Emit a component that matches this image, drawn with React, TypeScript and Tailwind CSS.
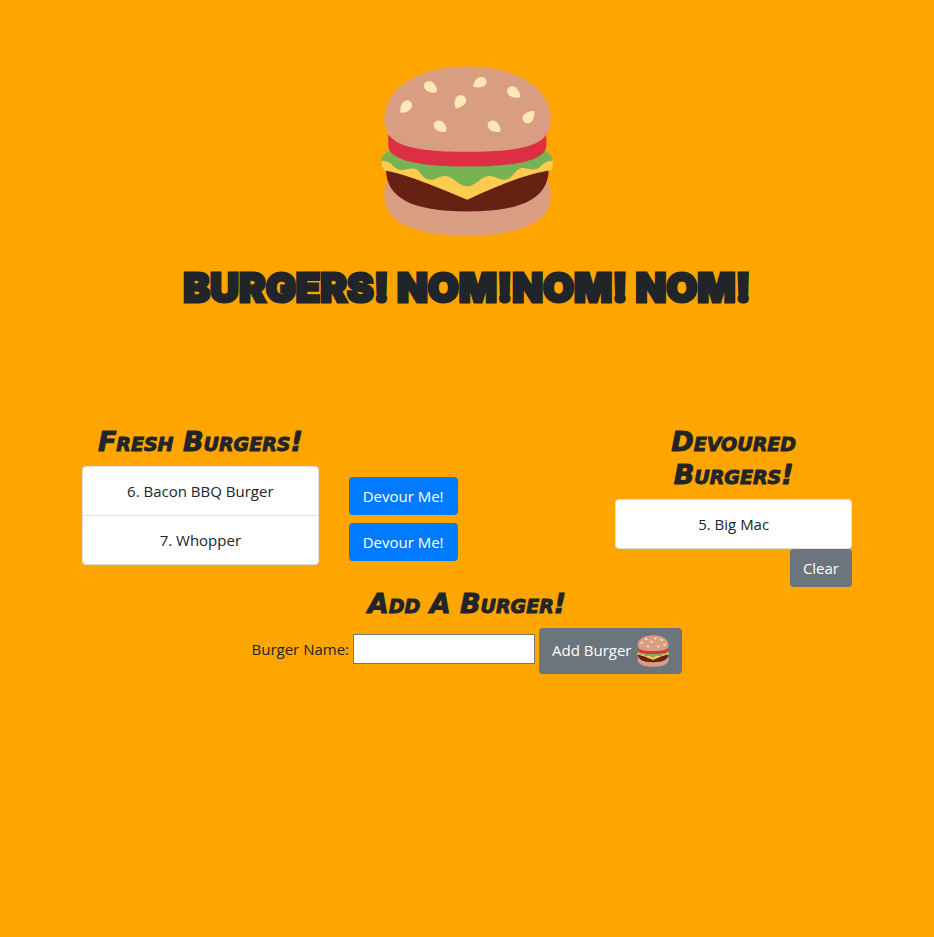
import type { ReactNode } from "react";

const fresh = [
  { id: 6, name: "Bacon BBQ Burger" },
  { id: 7, name: "Whopper" },
];
const devoured = [{ id: 5, name: "Big Mac" }];

const seeds = [
  "M91 168C90 150 98 137 112 136C124 138 130 150 124 159C117 169 104 175 91 173Z",
  "M163 86C168 77 181 76 190 84C198 92 202 103 199 111C187 116 172 112 165 103C161 97 161 91 163 86Z",
  "M308 92C312 77 320 67 333 66C346 67 351 77 348 86C343 97 325 101 308 95Z",
  "M255 158C250 143 253 130 264 122C276 118 288 125 288 136C286 149 273 158 260 160Z",
  "M412 101C418 92 432 92 440 102C447 110 451 121 448 127C435 131 420 127 413 118C409 112 409 106 412 101Z",
  "M491 168C476 168 463 173 457 183C453 195 462 206 474 205C487 201 493 187 491 168Z",
  "M192 204C198 194 211 194 220 203C228 211 231 222 228 229C216 233 201 229 194 220C190 214 190 209 192 204Z",
  "M353 204C359 194 372 194 381 203C389 211 392 222 389 229C377 233 362 229 355 220C351 214 351 209 353 204Z",
];

function Burger({ className }: { className: string }) {
  return (
    <svg className={className} viewBox="33 35 514 505" aria-hidden="true">
      <path fill="#D99E82" d="M43 420C43 385 55 368 80 360H503C528 368 540 385 540 420C540 500 455 540 291 540C128 540 43 500 43 420Z" />
      <path fill="#662113" d="M48 340H534C535 425 460 468 291 468C122 468 47 425 48 340Z" />
      <path fill="#FFCC4D" d="M37 315H545C547 328 547 340 543 345C490 351 410 377 291 433C172 383 95 354 43 345C36 340 35 328 37 315Z" />
      <path fill="#77B255" d="M58 286C47 293 38 302 33 312C38 321 46 316 56 321C70 329 75 343 91 344C108 345 116 338 132 340C151 344 153 367 173 373C193 378 204 361 226 362C252 365 266 393 291 393C317 393 329 364 354 362C376 361 389 377 408 373C429 367 432 344 451 339C466 337 474 344 491 343C507 342 513 327 526 320C535 316 543 321 547 312C542 302 535 294 525 286Z" />
      <path fill="#DD2E44" d="M55 240H527V271C527 313 445 334 291 334C137 334 55 313 55 271Z" />
      <path fill="#D99E82" d="M291 35C145 35 43 99 43 192C43 265 103 290 291 290C479 290 540 265 540 192C540 99 438 35 291 35Z" />
      <g fill="#FFE8B6">
        {seeds.map((d) => (
          <path key={d} d={d} />
        ))}
      </g>
    </svg>
  );
}

function Heading({ children }: { children: ReactNode }) {
  return (
    <h3 className="mb-2 text-center font-['DejaVu_Sans'] text-[27px] leading-[33px] font-bold italic [font-variant-caps:small-caps] [-webkit-text-stroke:1px_#212529]">
      {children}
    </h3>
  );
}

function BurgerList({ items }: { items: { id: number; name: string }[] }) {
  return (
    <ul className="divide-y divide-[#dfdfdf] rounded border border-[#dfdfdf] bg-white text-center">
      {items.map((b) => (
        <li key={b.id} className="px-5 py-3">
          {b.id}. {b.name}
        </li>
      ))}
    </ul>
  );
}

export default function App() {
  return (
    <div className="min-h-screen bg-[#ffa500] pt-16 font-['Open_Sans',sans-serif] text-[15px] leading-6 text-[#212529]">
      <header className="flex flex-col items-center">
        <Burger className="mt-0.5 h-[170px] w-[172px]" />
        <h1 className="mt-6 text-center font-['Inter'] text-[40px] leading-[56px] font-black [-webkit-text-stroke:3px_#212529] [stroke-linejoin:round]">
          BURGERS! NOM!NOM! NOM!
        </h1>
      </header>

      <main className="mx-auto mt-[109px] max-w-[800px] px-[15px]">
        <div className="grid grid-cols-3 gap-[30px]">
          <section>
            <Heading>Fresh Burgers!</Heading>
            <BurgerList items={fresh} />
          </section>
          <div className="flex flex-col items-start gap-2 pt-[52px]">
            {fresh.map((b) => (
              <button key={b.id} type="button" className="h-[38px] rounded bg-[#007bff] px-3.5 text-white">
                Devour Me!
              </button>
            ))}
          </div>
          <section className="flex flex-col">
            <Heading>Devoured Burgers!</Heading>
            <BurgerList items={devoured} />
            <button type="button" className="h-[38px] self-end rounded bg-[#6c757d] px-[13px] text-white">
              Clear
            </button>
          </section>
        </div>

        <Heading>Add A Burger!</Heading>
        <form className="flex items-start justify-center gap-1" onSubmit={(e) => e.preventDefault()}>
          <label htmlFor="burger-name" className="mt-[9px]">
            Burger Name:
          </label>
          <input
            id="burger-name"
            type="text"
            className="mt-1.5 h-[30px] w-[182px] border border-[#767676] bg-white px-0.5"
          />
          <button type="submit" className="flex h-[46px] items-center gap-1.5 rounded bg-[#6c757d] px-[13px] text-white">
            <span className="pb-0.5">Add Burger</span>
            <Burger className="h-8 w-8" />
          </button>
        </form>
      </main>
    </div>
  );
}
